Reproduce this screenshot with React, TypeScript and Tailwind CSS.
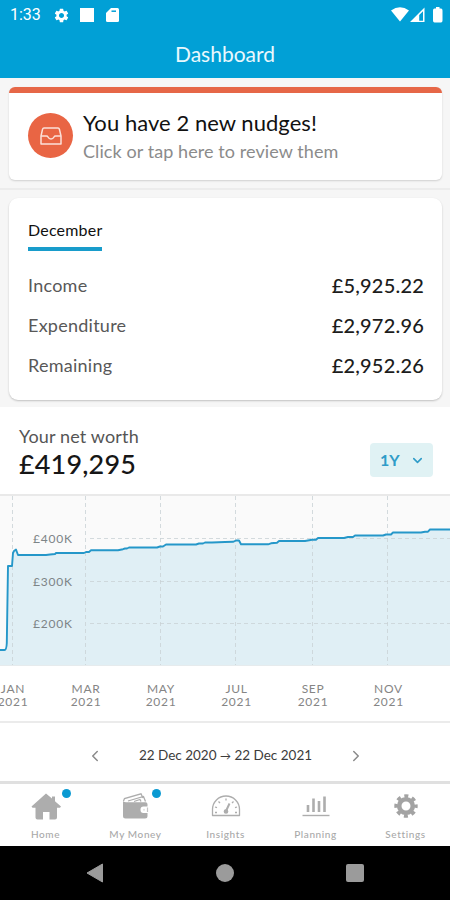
import type { ReactNode } from "react";
import { ChevronDown, ChevronLeft, ChevronRight } from "lucide-react";
import { MdSettings } from "react-icons/md";

const summary = [
  { label: "Income", value: "£5,925.22" },
  { label: "Expenditure", value: "£2,972.96" },
  { label: "Remaining", value: "£2,952.26" },
];

const months = [
  { x: 13, label: "JAN" },
  { x: 86, label: "MAR" },
  { x: 161, label: "MAY" },
  { x: 236.5, label: "JUL" },
  { x: 313, label: "SEP" },
  { x: 388.5, label: "NOV" },
];

const levels = [
  { y: 42, label: "£400K" },
  { y: 85, label: "£300K" },
  { y: 127, label: "£200K" },
];

const worthLine =
  "M0 154 H4.5 Q6.5 154 6.8 147 L8 70 H12 L13 57 L14 55 L16 53.5 L18 59 H46 L50 58.5 L55 58 L56 57 H84 L86 56 H89 L91 54.3 H118 L123 53.2 L125 52.5 H127 L129 51.5 H157 L160 50.5 H163 L166 48.5 H196 L199 47.5 H203 L205 46.5 H212 L225 46 L233 45.8 L236 44.5 H239 L241 48.3 H268 L271 47.3 L277 46.8 L279 45 H305 L312 43.7 H316 L318 42 H344 L348 41 H353 L355 39.5 H383 L386 38.5 H391 L393 36.5 H421 L425 35.7 H428 L430 33.5 H450";

const StatusBar = () => (
  <div className="flex h-[30px] items-center justify-between pl-[10px] pr-[7px] text-white">
    <div className="flex items-center">
      <span className="w-[43px] font-['Roboto'] text-[16px] leading-none">1:33</span>
      <MdSettings className="h-[17px] w-[17px]" />
      <div className="ml-[10px] h-[14px] w-[14px] bg-white" />
      <svg className="ml-[12px]" width="13" height="14" viewBox="0 0 13 14">
        <path d="M5 0H11.5Q13 0 13 1.5V12.5Q13 14 11.5 14H1.5Q0 14 0 12.5V5Z" fill="#fff" />
        <path d="M5.5 3.2H10" stroke="#039fd6" strokeWidth="1.5" />
      </svg>
    </div>
    <svg width="52" height="16" viewBox="0 0 52 16" fill="#fff">
      <path d="M0 3.5Q9 -2.8 18 3.5L9 14.5Z" />
      <path fillRule="evenodd" d="M19 15L33.5 0.5V15ZM28.2 8V13.7H32V4.3Z" />
      <path d="M43.5 1.5H45V0H48.5V1.5H50Q51.500 1.5 51.500 3.5V13.5Q51.500 15.5 50 15.5H43.5Q42 15.5 42 13.5V3.5Q42 1.5 43.5 1.5Z" />
    </svg>
  </div>
);

const NudgeCard = () => (
  <div className="h-[93px] overflow-hidden rounded-[6px] border-t-[6px] border-[#e66747] bg-white shadow-[0_1px_2px_rgba(0,0,0,0.16)]">
    <div className="flex pl-[19px] pt-[20px]">
      <div className="flex h-[45px] w-[45px] items-center justify-center rounded-full bg-[#e96544]">
        <svg width="22" height="18" viewBox="0 0 22 18" fill="none" stroke="#fbe0d9" strokeWidth="1.5" strokeLinejoin="round">
          <path d="M1 9L2.6 2.2Q2.9 1 4 1H18Q19.1 1 19.4 2.2L21 9V17H1Z" />
          <path d="M1 9H6.5Q7.5 9 8 10Q9 12 11 12T14 10Q14.5 9 15.5 9H21" />
        </svg>
      </div>
      <div className="-mt-[4px] ml-[10px]">
        <p className="text-[22px] leading-[28px] tracking-[0.05px] text-[#111]">You have 2 new nudges!</p>
        <p className="text-[18px] leading-[28px] tracking-[0.08px] text-[#8b8b8b]">Click or tap here to review them</p>
      </div>
    </div>
  </div>
);

const MonthCard = () => (
  <div className="h-[202px] rounded-[9px] bg-white px-[19px] pt-[21px] shadow-[0_1px_2px_rgba(0,0,0,0.22)]">
    <div className="h-[32px] w-[74px] whitespace-nowrap border-b-[4px] border-[#189ccb] text-[16px] leading-[21px] tracking-[0.2px] text-[#111]">
      December
    </div>
    <div className="mt-[14px]">
      {summary.map((row) => (
        <div key={row.label} className="flex h-[40px] items-center justify-between">
          <span className="text-[18px] tracking-[0.25px] text-[#585858]">{row.label}</span>
          <span className="-mr-px text-[20px] font-medium tracking-[0.2px] text-[#1c1c1c]">{row.value}</span>
        </div>
      ))}
    </div>
  </div>
);

const NetWorthChart = () => (
  <svg className="block" width="450" height="225" viewBox="0 0 450 225">
    <rect width="450" height="170" fill="#fafafa" />
    <path d={`${worthLine} V169.5 H0 Z`} fill="#e0eff5" />
    <path d="M0 169.5H450" stroke="#e6ebed" />
    <g stroke="#c9d2d6" strokeOpacity="0.8" strokeDasharray="4 3">
      {months.map((m) => (
        <path key={m.label} d={`M${Math.floor(m.x) - 0.5} 0V169`} />
      ))}
      {levels.map((l) => (
        <path key={l.label} d={`M90 ${l.y + 0.5}H450`} />
      ))}
    </g>
    <path d={worthLine} fill="none" stroke="#2597c9" strokeWidth="1.9" strokeLinejoin="round" />
    <g fill="#7d8487" fontSize="12" letterSpacing="0.8">
      {levels.map((l) => (
        <text key={l.label} x="33" y={l.y + 4.5}>
          {l.label}
        </text>
      ))}
    </g>
    <g fill="#858585" fontSize="12" letterSpacing="0.7" textAnchor="middle">
      {months.map((m) => (
        <text key={m.label} x={m.x} y="197">
          {m.label}
          <tspan x={m.x} y="210">
            2021
          </tspan>
        </text>
      ))}
    </g>
  </svg>
);

const HomeIcon = () => (
  <svg width="30" height="27" viewBox="0 0 30 27" fill="#adadad">
    <path d="M15 0.5L21 5.5V3.5H24V8.2L30 13.5L29 14.7H26V24.5Q26 26.5 24 26.5H18.5V19H12V26.5H6.5Q4.5 26.5 4.5 24.5V14.7H1.5L0.5 13.5Z" />
  </svg>
);

const WalletIcon = () => (
  <svg width="28" height="26" viewBox="0 0 28 26">
    <path d="M1.5 8L2.5 5.5L19 0.8L21 5M6 8L21.5 3.5L23.5 8.5M12 8.5L18 6.5L19 8.5" fill="none" stroke="#adadad" strokeWidth="1.3" />
    <path d="M1 7Q1 9.2 4 9.2H23.5Q25.5 9.2 25.5 11.2V23Q25.5 25.5 23 25.5H3.5Q1 25.5 1 23Z" fill="#adadad" />
    <path d="M27 13.5H21.5Q18.5 13.5 18.5 16.8T21.5 20H27Z" fill="#fff" />
    <path d="M25.5 14.5V19" stroke="#c4c4c4" strokeWidth="1.2" />
    <circle cx="22" cy="16.8" r="1" fill="#e2e2e2" />
  </svg>
);

const GaugeIcon = () => (
  <svg width="30" height="22" viewBox="0 0 30 22" fill="none" stroke="#adadad" strokeWidth="1.3">
    <path d="M1.5 20.5V14.5A13.500 13.500 0 0 1 28.500 14.5V20.5Z" strokeLinejoin="round" />
    <path d="M15 3.5V5.5M7.5 6.5L9 8M22.5 6.5L21 8M4 12L6 12.7M26 12L24 12.7M4 17.5H6M24 17.5H26" />
    <path d="M15 16L18.5 8.5" strokeWidth="2" />
    <circle cx="15" cy="16.5" r="1.7" fill="#adadad" />
  </svg>
);

const BarsIcon = () => (
  <svg width="28" height="21" viewBox="0 0 28 21" stroke="#adadad">
    <path d="M6 16V9M11.5 16V2.5M17 16V5M22.5 16V0.5" strokeWidth="2.6" />
    <path d="M0.5 19.5H27.5" strokeWidth="1.4" />
  </svg>
);

const GearIcon = () => (
  <svg width="24" height="24" viewBox="0 0 24 24">
    <circle cx="12" cy="12" r="6.8" fill="none" stroke="#a3a3a3" strokeWidth="4.6" />
    <circle cx="12" cy="12" r="10" fill="none" stroke="#a3a3a3" strokeWidth="3.4" strokeDasharray="4 3.854" strokeDashoffset="2" />
  </svg>
);

const NavItem = ({ label, badge, children }: { label: string; badge?: boolean; children: ReactNode }) => (
  <div className="relative flex flex-col items-center pl-px">
    <div className="flex h-[44px] items-center justify-center">{children}</div>
    <span className="whitespace-nowrap text-[10px] font-medium leading-[12px] tracking-[0.6px] text-[#a9a9a9]">{label}</span>
    {badge && <span className="absolute left-[62px] top-[5px] h-[9px] w-[9px] rounded-full bg-[#0a9ad2]" />}
  </div>
);

export default function App() {
  return (
    <div className="flex h-[900px] w-[450px] flex-col overflow-hidden bg-white font-['Lato',sans-serif]">
      <header className="h-[78px] bg-[#01a0d6]">
        <StatusBar />
        <h1 className="pt-[10px] text-center text-[21px] leading-[28px] text-[#e9f8fd]">Dashboard</h1>
      </header>

      <section className="h-[329px] bg-[#f6f6f6]">
        <div className="h-[111px] pl-[9px] pr-[8px] pt-[9px]">
          <NudgeCard />
          <div className="-ml-[9px] -mr-[8px] mt-[8px] h-[2px] bg-[#ececec]" />
        </div>
        <div className="pl-[9px] pr-[8px] pt-[9px]">
          <MonthCard />
        </div>
      </section>

      <section className="flex h-[89px] justify-between border-b-2 border-[#e9e9e9] pl-[19px] pr-[17px]">
        <div className="pt-[17px]">
          <p className="text-[18px] leading-[24px] tracking-[0.15px] text-[#555]">Your net worth</p>
          <p className="text-[27px] font-medium leading-[31px] tracking-[0.15px] text-[#161616]">£419,295</p>
        </div>
        <button className="mt-[36px] flex h-[34px] w-[63px] items-center justify-between rounded-[4px] bg-[#e0f2f4] pl-[10px] pr-[8px] text-[16px] font-bold text-[#2f9cc8]">
          1Y
          <ChevronDown size={15} strokeWidth={2.5} />
        </button>
      </section>

      <NetWorthChart />

      <section className="flex h-[60px] items-center justify-between border-t-2 border-[#ebebeb] pl-[86px] pr-[85px] pt-[7px] text-[#8a8a8a]">
        <ChevronLeft size={18} strokeWidth={2} />
        <span className="whitespace-nowrap text-[13.5px] text-[#3c3c3c]">
          22 Dec 2020 <span className="text-[11px]">→</span> 22 Dec 2021
        </span>
        <ChevronRight size={18} strokeWidth={2} />
      </section>

      <nav className="grid h-[65px] grid-cols-5 border-t-[3px] border-[#e0e0e0]">
        <NavItem label="Home" badge>
          <HomeIcon />
        </NavItem>
        <NavItem label="My Money" badge>
          <WalletIcon />
        </NavItem>
        <NavItem label="Insights">
          <GaugeIcon />
        </NavItem>
        <NavItem label="Planning">
          <BarsIcon />
        </NavItem>
        <NavItem label="Settings">
          <GearIcon />
        </NavItem>
      </nav>

      <footer className="flex h-[54px] items-center justify-between bg-black px-[86px]">
        <svg width="18" height="20" viewBox="0 0 18 20">
          <path d="M16.5 1V19L1 10Z" fill="#9b9b9b" stroke="#9b9b9b" strokeLinejoin="round" />
        </svg>
        <div className="h-[18px] w-[18px] rounded-full bg-[#9b9b9b]" />
        <div className="h-[18px] w-[18px] rounded-[2px] bg-[#9b9b9b]" />
      </footer>
    </div>
  );
}
